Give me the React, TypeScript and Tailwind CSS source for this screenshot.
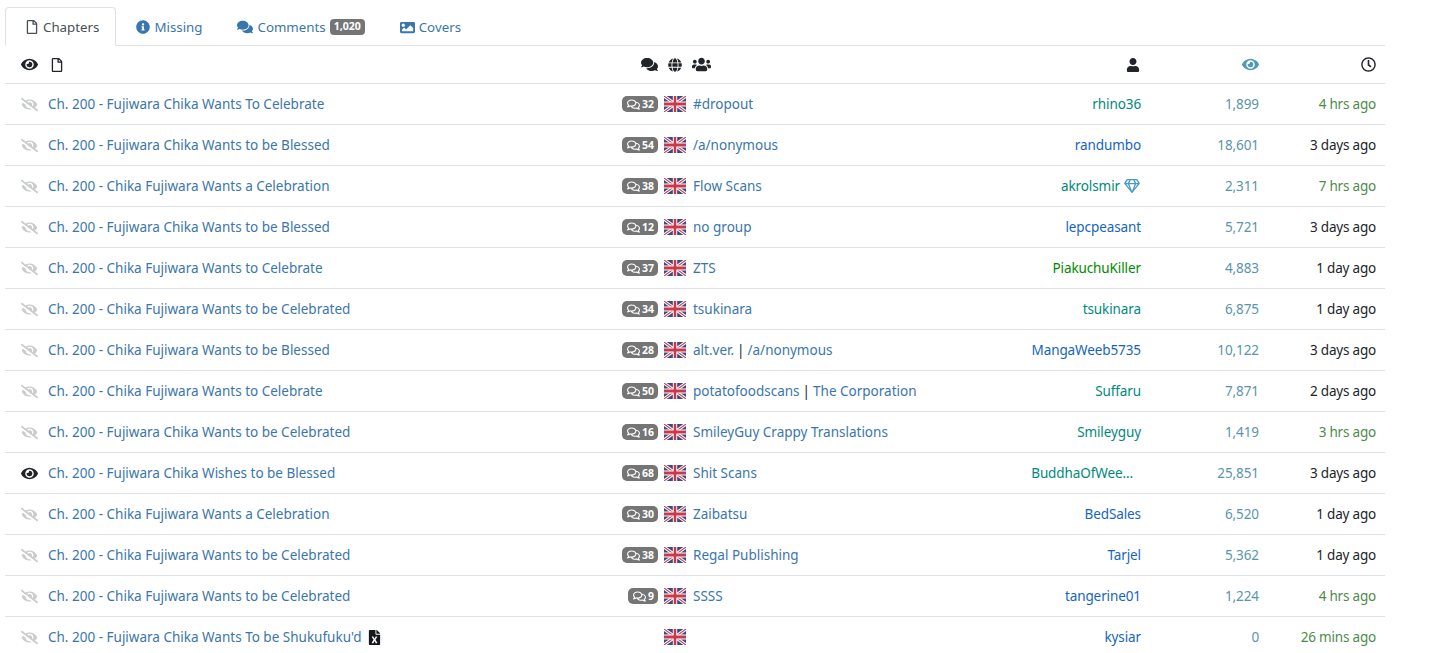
import React from "react";
import {
  FaComments,
  FaEye,
  FaEyeSlash,
  FaFileExcel,
  FaGlobe,
  FaImage,
  FaInfoCircle,
  FaRegClock,
  FaRegComments,
  FaRegFile,
  FaRegGem,
  FaUser,
  FaUsers,
} from "react-icons/fa";

const TEAL = "text-[#00897b]";
const BLUE = "text-[#1565c0]";
const GREEN = "text-[#008a00]";

type Chapter = {
  title: string;
  comments?: number;
  groups: string[];
  user: string;
  userColor: string;
  gem?: boolean;
  clipped?: boolean;
  views: string;
  time: string;
  recent?: boolean;
  read?: boolean;
  deleted?: boolean;
};

const chapters: Chapter[] = [
  { title: "Ch. 200 - Fujiwara Chika Wants To Celebrate", comments: 32, groups: ["#dropout"], user: "rhino36", userColor: TEAL, views: "1,899", time: "4 hrs ago", recent: true },
  { title: "Ch. 200 - Fujiwara Chika Wants to be Blessed", comments: 54, groups: ["/a/nonymous"], user: "randumbo", userColor: BLUE, views: "18,601", time: "3 days ago" },
  { title: "Ch. 200 - Chika Fujiwara Wants a Celebration", comments: 38, groups: ["Flow Scans"], user: "akrolsmir", userColor: TEAL, gem: true, views: "2,311", time: "7 hrs ago", recent: true },
  { title: "Ch. 200 - Fujiwara Chika Wants to be Blessed", comments: 12, groups: ["no group"], user: "lepcpeasant", userColor: BLUE, views: "5,721", time: "3 days ago" },
  { title: "Ch. 200 - Chika Fujiwara Wants to Celebrate", comments: 37, groups: ["ZTS"], user: "PiakuchuKiller", userColor: GREEN, views: "4,883", time: "1 day ago" },
  { title: "Ch. 200 - Chika Fujiwara Wants to be Celebrated", comments: 34, groups: ["tsukinara"], user: "tsukinara", userColor: TEAL, views: "6,875", time: "1 day ago" },
  { title: "Ch. 200 - Chika Fujiwara Wants to be Blessed", comments: 28, groups: ["alt.ver.", "/a/nonymous"], user: "MangaWeeb5735", userColor: BLUE, views: "10,122", time: "3 days ago" },
  { title: "Ch. 200 - Chika Fujiwara Wants to Celebrate", comments: 50, groups: ["potatofoodscans", "The Corporation"], user: "Suffaru", userColor: TEAL, views: "7,871", time: "2 days ago" },
  { title: "Ch. 200 - Fujiwara Chika Wants to be Celebrated", comments: 16, groups: ["SmileyGuy Crappy Translations"], user: "Smileyguy", userColor: TEAL, views: "1,419", time: "3 hrs ago", recent: true },
  { title: "Ch. 200 - Fujiwara Chika Wishes to be Blessed", comments: 68, groups: ["Shit Scans"], user: "BuddhaOfWee...", userColor: TEAL, clipped: true, views: "25,851", time: "3 days ago", read: true },
  { title: "Ch. 200 - Chika Fujiwara Wants a Celebration", comments: 30, groups: ["Zaibatsu"], user: "BedSales", userColor: BLUE, views: "6,520", time: "1 day ago" },
  { title: "Ch. 200 - Chika Fujiwara Wants to be Celebrated", comments: 38, groups: ["Regal Publishing"], user: "Tarjel", userColor: BLUE, views: "5,362", time: "1 day ago" },
  { title: "Ch. 200 - Chika Fujiwara Wants to be Celebrated", comments: 9, groups: ["SSSS"], user: "tangerine01", userColor: BLUE, views: "1,224", time: "4 hrs ago", recent: true },
  { title: "Ch. 200 - Fujiwara Chika Wants To be Shukufuku'd", groups: [], user: "kysiar", userColor: BLUE, views: "0", time: "26 mins ago", recent: true, deleted: true },
];

function UkFlag() {
  return (
    <svg viewBox="0 0 60 40" className="w-[22px] h-[16px] block" preserveAspectRatio="none">
      <rect width="60" height="40" fill="#3b4a80" />
      <path d="M0 0L60 40M60 0L0 40" stroke="#fff" strokeWidth="8" />
      <path d="M0 0L60 40M60 0L0 40" stroke="#c44a5a" strokeWidth="3" />
      <path d="M30 0V40M0 20H60" stroke="#fff" strokeWidth="12" />
      <path d="M30 0V40M0 20H60" stroke="#c9394c" strokeWidth="7" />
    </svg>
  );
}

function Tab({
  icon,
  label,
  active,
  badge,
}: {
  icon: React.ReactNode;
  label: string;
  active?: boolean;
  badge?: string;
}) {
  return (
    <div
      className={
        active
          ? "flex items-center h-[39px] pl-[19px] pr-4 -mb-px bg-white border border-[#dee2e6] border-b-white rounded-t text-[#495057]"
          : "flex items-center h-[38px] pt-[2px] px-4 ml-[4px] mr-[-1px] text-[#3a76ad]"
      }
    >
      {icon}
      <span className="text-[13.3px] leading-[20px]">{label}</span>
      {badge && (
        <span className="ml-[4px] h-[16px] px-[4px] flex items-center rounded-[4px] bg-[#757575] text-white text-[10.5px] font-bold">
          {badge}
        </span>
      )}
    </div>
  );
}

function ChapterRow({ chapter }: { chapter: Chapter }) {
  return (
    <div className="flex items-center h-[41px] border-b border-[#dee2e6] pl-[16px] pr-[9px] leading-[20px]">
      <div className="w-[27px] shrink-0 pt-[1px]">
        {chapter.read ? (
          <FaEye className="text-[17px] text-[#212529]" />
        ) : (
          <FaEyeSlash className="text-[17px] text-[#cacccd]" />
        )}
      </div>
      <div className="w-[610px] shrink-0 flex items-center justify-between">
        <div className="flex items-center gap-[5px] text-[#3a76ad]">
          <span>{chapter.title}</span>
          {chapter.deleted && <FaFileExcel className="text-[15px] text-[#16181b]" />}
        </div>
        {chapter.comments !== undefined && (
          <span className="h-[16px] flex items-center gap-[2px] pl-[5px] pr-[4px] rounded-[5px] bg-[#757575] text-white text-[10.5px] font-bold">
            <FaRegComments className="text-[13px]" />
            {chapter.comments}
          </span>
        )}
      </div>
      <div className="ml-[6px] w-[22px] shrink-0">
        <UkFlag />
      </div>
      <div className="ml-[7px] w-[335px] shrink-0 text-[#3a76ad]">
        {chapter.groups.map((group, i) => (
          <span key={group}>
            {i > 0 && <span className="text-[#212529] mx-[3px]">|</span>}
            {group}
          </span>
        ))}
      </div>
      <div className={`w-[113px] shrink-0 flex items-center justify-end gap-[4px] tracking-[-0.1px] ${chapter.userColor}`}>
        <span className={chapter.clipped ? "mr-[8px] whitespace-nowrap" : "whitespace-nowrap"}>{chapter.user}</span>
        {chapter.gem && <FaRegGem className="text-[16px] text-[#4a9bc4] shrink-0 mr-[1px]" />}
      </div>
      <div className="w-[118px] shrink-0 text-right text-[#5a95ab] tracking-[-0.1px]">{chapter.views}</div>
      <div className={`w-[117px] shrink-0 text-right tracking-[-0.2px] ${chapter.recent ? "text-[#4c8c4a]" : "text-[#212529]"}`}>
        {chapter.time}
      </div>
    </div>
  );
}

export default function App() {
  return (
    <div className="bg-white min-h-[653px] overflow-hidden pl-[5px] pt-[7px] w-[1385px] text-[13.5px] font-['Noto_Sans',sans-serif]">
      <div className="flex border-b border-[#dee2e6] h-[39px]">
        <Tab active icon={<FaRegFile className="text-[14px] mr-[4px]" />} label="Chapters" />
        <Tab icon={<FaInfoCircle className="text-[14px] mr-[4px]" />} label="Missing" />
        <Tab icon={<FaComments className="text-[16px] mr-[4px]" />} label="Comments" badge="1,020" />
        <Tab icon={<FaImage className="text-[15px] mr-[4px]" />} label="Covers" />
      </div>
      <div className="flex items-center h-[38px] border-b border-[#dee2e6] pl-[16px] pr-[9px] text-[#212529]">
        <div className="w-[29px] shrink-0">
          <FaEye className="text-[17px]" />
        </div>
        <div className="w-[591px] shrink-0">
          <FaRegFile className="text-[14px]" />
        </div>
        <div className="w-[27px] shrink-0">
          <FaComments className="text-[17px]" />
        </div>
        <div className="w-[24px] shrink-0">
          <FaGlobe className="text-[14px]" />
        </div>
        <div className="w-[434px] shrink-0">
          <FaUsers className="text-[19px]" />
        </div>
        <div className="w-[116px] shrink-0">
          <FaUser className="text-[14px]" />
        </div>
        <div className="w-[119px] shrink-0">
          <FaEye className="text-[17px] text-[#4f9ab5]" />
        </div>
        <div>
          <FaRegClock className="text-[15px]" />
        </div>
      </div>
      {chapters.map((chapter, i) => (
        <ChapterRow key={i} chapter={chapter} />
      ))}
    </div>
  );
}
